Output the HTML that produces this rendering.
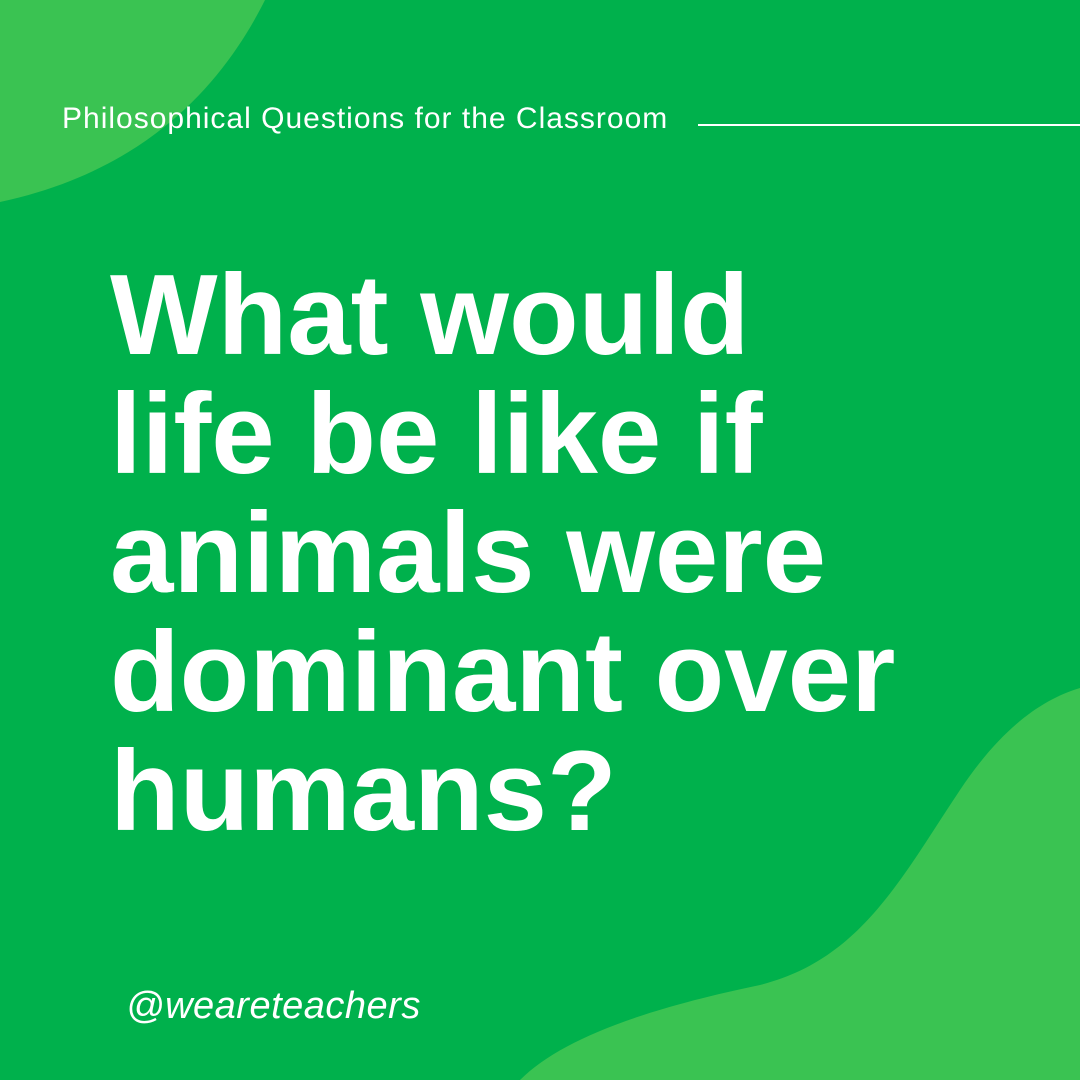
<!DOCTYPE html>
<html><head><meta charset="utf-8"><style>
html,body{margin:0;padding:0}
body{width:1080px;height:1080px;background:#00b14c;position:relative;overflow:hidden;font-family:"Liberation Sans",sans-serif;color:#fff}
svg{position:absolute;left:0;top:0}
.sub{position:absolute;left:62px;top:102px;font-size:30px;letter-spacing:1px;white-space:nowrap}
.line{position:absolute;left:698px;top:124px;width:382px;height:1.5px;background:#fff}
.h{position:absolute;left:110px;top:256px;font-size:114px;font-weight:bold;line-height:119px;letter-spacing:0px;white-space:nowrap}
.tag{position:absolute;left:126px;top:985px;font-size:38px;font-style:italic;letter-spacing:0.5px}
</style></head><body>
<svg width="1080" height="1080" viewBox="0 0 1080 1080">
<path d="M0 0 H265 C225 80 150 170 0 202 Z" fill="#3ac352"/>
<path d="M520 1080 C560 1040 640 1010 760 985 C860 960 900 880 960 790 C1000 730 1040 700 1080 688 V1080 Z" fill="#3ac352"/>
</svg>
<div class="sub">Philosophical Questions for the Classroom</div>
<div class="line"></div>
<div class="h">What would<br>life be like if<br>animals were<br>dominant over<br>humans?</div>
<div class="tag">@weareteachers</div>
</body></html>
